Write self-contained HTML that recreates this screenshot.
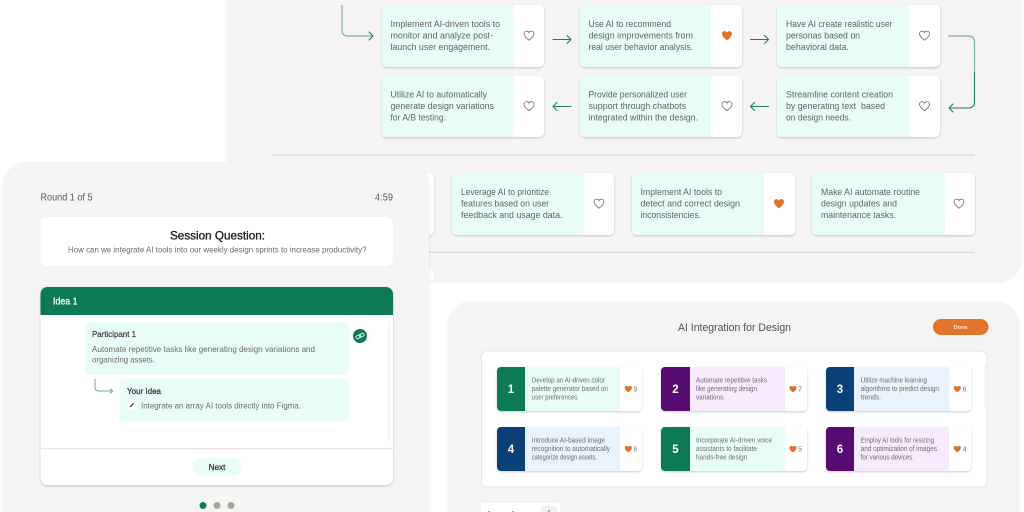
<!DOCTYPE html>
<html lang="en"><head><meta charset="utf-8"><title>AI Integration for Design</title>
<style>
html,body{margin:0;padding:0;background:#fff;width:1024px;height:512px;overflow:hidden}
svg{display:block;filter:blur(.3px)}
text{font-family:"Liberation Sans",sans-serif}
.c{font-size:9.3px;fill:#636363}
.s{font-size:6.9px;fill:#6e6e6e}
.n{font-size:11.5px;font-weight:700;fill:#fff;text-anchor:middle}
.k{font-size:7.2px;fill:#777}
.a{fill:none;stroke:#1c7f5e;stroke-width:1.1;stroke-linecap:round;stroke-linejoin:round}
.b{fill:none;stroke:#7db3a0;stroke-width:1.2}
.h{fill:none;stroke:#666;stroke-width:.8}
.o{fill:#e0722a}
.m{fill:#e8fdf6}.w{fill:#fff}
</style></head><body>
<svg width="1024" height="512" viewBox="0 0 1024 512" xmlns="http://www.w3.org/2000/svg">
<defs>
<path id="ht" d="M0 4.700C-1.700 3.400-5 1-5-1.800C-5-3.500-3.700-4.400-2.500-4.400C-1.400-4.400-.4-3.700 0-2.900C.4-3.700 1.400-4.400 2.500-4.400C3.700-4.400 5-3.500 5-1.800C5 1 1.700 3.400 0 4.700Z"/>
<filter id="sh" x="-10%" y="-10%" width="120%" height="125%"><feDropShadow dx="0" dy="1" stdDeviation="1.1" flood-color="#000" flood-opacity=".2"/></filter>
<filter id="sp" x="-5%" y="-5%" width="110%" height="110%"><feDropShadow dx="0" dy="1" stdDeviation="1.2" flood-color="#000" flood-opacity=".09"/></filter>
</defs>

<!-- top panel -->
<path d="M227 -20H1021V257A24 24 0 0 1 997 281H227Z" fill="#f5f4f2" filter="url(#sp)"/>
<rect x="272" y="154.500" width="703" height="1.2" fill="#d6d5d2"/>
<rect x="272" y="251.800" width="703" height="1.2" fill="#d6d5d2"/>

<!-- row 1 -->
<rect x="382" y="5" width="162" height="62" rx="5" class="w" filter="url(#sh)"/>
<path class="m" d="M387 5H514V67H387A5 5 0 0 1 382 62V10A5 5 0 0 1 387 5Z"/>
<rect x="580" y="5" width="162" height="62" rx="5" class="w" filter="url(#sh)"/>
<path class="m" d="M585 5H711V67H585A5 5 0 0 1 580 62V10A5 5 0 0 1 585 5Z"/>
<rect x="777" y="5" width="163" height="62" rx="5" class="w" filter="url(#sh)"/>
<path class="m" d="M782 5H909V67H782A5 5 0 0 1 777 62V10A5 5 0 0 1 782 5Z"/>
<!-- row 2 -->
<rect x="382" y="76" width="162" height="61" rx="5" class="w" filter="url(#sh)"/>
<path class="m" d="M387 76H514V137H387A5 5 0 0 1 382 132V81A5 5 0 0 1 387 76Z"/>
<rect x="580" y="76" width="162" height="61" rx="5" class="w" filter="url(#sh)"/>
<path class="m" d="M585 76H711V137H585A5 5 0 0 1 580 132V81A5 5 0 0 1 585 76Z"/>
<rect x="777" y="76" width="163" height="61" rx="5" class="w" filter="url(#sh)"/>
<path class="m" d="M782 76H909V137H782A5 5 0 0 1 777 132V81A5 5 0 0 1 782 76Z"/>
<!-- row 3 -->
<rect x="400" y="173" width="34" height="62" rx="5" class="w" filter="url(#sh)"/>
<rect x="452" y="173" width="162" height="62" rx="5" class="w" filter="url(#sh)"/>
<path class="m" d="M457 173H584V235H457A5 5 0 0 1 452 230V178A5 5 0 0 1 457 173Z"/>
<rect x="632" y="173" width="163" height="62" rx="5" class="w" filter="url(#sh)"/>
<path class="m" d="M637 173H764V235H637A5 5 0 0 1 632 230V178A5 5 0 0 1 637 173Z"/>
<rect x="812" y="173" width="163" height="62" rx="5" class="w" filter="url(#sh)"/>
<path class="m" d="M817 173H945V235H817A5 5 0 0 1 812 230V178A5 5 0 0 1 817 173Z"/>
<rect x="400" y="270" width="34" height="11" rx="4" class="w"/>

<g class="c">
<text x="390.500" y="27" textLength="109.500" lengthAdjust="spacingAndGlyphs">Implement AI-driven tools to</text>
<text x="390.500" y="38.500" textLength="102.500" lengthAdjust="spacingAndGlyphs">monitor and analyze post-</text>
<text x="390.500" y="50" textLength="99.500" lengthAdjust="spacingAndGlyphs">launch user engagement.</text>
<text x="588.500" y="27" textLength="82.500" lengthAdjust="spacingAndGlyphs">Use AI to recommend</text>
<text x="588.500" y="38.500" textLength="104.500" lengthAdjust="spacingAndGlyphs">design improvements from</text>
<text x="588.500" y="50" textLength="104.500" lengthAdjust="spacingAndGlyphs">real user behavior analysis.</text>
<text x="786" y="27" textLength="106.500" lengthAdjust="spacingAndGlyphs">Have AI create realistic user</text>
<text x="786" y="38.500" textLength="74" lengthAdjust="spacingAndGlyphs">personas based on</text>
<text x="786" y="50" textLength="63" lengthAdjust="spacingAndGlyphs">behavioral data.</text>
<text x="390.500" y="97.500" textLength="96.500" lengthAdjust="spacingAndGlyphs">Utilize AI to automatically</text>
<text x="390.500" y="109" textLength="103.500" lengthAdjust="spacingAndGlyphs">generate design variations</text>
<text x="390.500" y="120.500" textLength="55.500" lengthAdjust="spacingAndGlyphs">for A/B testing.</text>
<text x="588.500" y="97.500" textLength="98.500" lengthAdjust="spacingAndGlyphs">Provide personalized user</text>
<text x="588.500" y="109" textLength="97.500" lengthAdjust="spacingAndGlyphs">support through chatbots</text>
<text x="588.500" y="120.500" textLength="109.500" lengthAdjust="spacingAndGlyphs">integrated within the design.</text>
<text x="786" y="97.500" textLength="107" lengthAdjust="spacingAndGlyphs">Streamline content creation</text>
<text x="786" y="109" textLength="99" xml:space="preserve" lengthAdjust="spacingAndGlyphs">by generating text  based</text>
<text x="786" y="120.500" textLength="65" lengthAdjust="spacingAndGlyphs">on design needs.</text>
<text x="461" y="195" textLength="88" lengthAdjust="spacingAndGlyphs">Leverage AI to prioritize</text>
<text x="461" y="206.500" textLength="88" lengthAdjust="spacingAndGlyphs">features based on user</text>
<text x="461" y="218" textLength="101.500" lengthAdjust="spacingAndGlyphs">feedback and usage data.</text>
<text x="640.500" y="195" textLength="81.500" lengthAdjust="spacingAndGlyphs">Implement AI tools to</text>
<text x="640.500" y="206.500" textLength="99.500" lengthAdjust="spacingAndGlyphs">detect and correct design</text>
<text x="640.500" y="218" textLength="60.500" lengthAdjust="spacingAndGlyphs">inconsistencies.</text>
<text x="821" y="195" textLength="99" lengthAdjust="spacingAndGlyphs">Make AI automate routine</text>
<text x="821" y="206.500" textLength="76" lengthAdjust="spacingAndGlyphs">design updates and</text>
<text x="821" y="218" textLength="75" lengthAdjust="spacingAndGlyphs">maintenance tasks.</text>
</g>

<use href="#ht" x="529" y="35.500" class="h"/>
<use href="#ht" x="727" y="35.500" class="o"/>
<use href="#ht" x="924.500" y="35.500" class="h"/>
<use href="#ht" x="529" y="106" class="h"/>
<use href="#ht" x="727" y="106" class="h"/>
<use href="#ht" x="924.500" y="106" class="h"/>
<use href="#ht" x="599" y="203.500" class="h"/>
<use href="#ht" x="779" y="203.500" class="o"/>
<use href="#ht" x="959" y="203.500" class="h"/>

<!-- arrows -->
<path class="b" d="M342 5V30Q342 36 348 36H372"/><path class="a" d="M369 32L373 36L369 40"/>
<path class="a" d="M553 39.500H571M567 35.500L571 39.500L567 43.500"/>
<path class="a" d="M750.500 39.500H768.500M764.500 35.500L768.500 39.500L764.500 43.500"/>
<path class="a" d="M553 106.500H571M557 102.500L553 106.500L557 110.500"/>
<path class="a" d="M750.500 106.500H768.500M754.500 102.500L750.500 106.500L754.500 110.500"/>
<path class="b" d="M948 36H968Q974.500 36 974.500 42V72"/>
<path class="a" d="M974.500 72V102Q974.500 108 968 108H949M953 104L949 108L953 112"/>

<!-- bottom panel -->
<path d="M472 301H995A24 24 0 0 1 1019 325V530H448V325A24 24 0 0 1 472 301Z" fill="#f5f4f2" filter="url(#sp)"/>
<text x="678" y="331" font-size="10.800" fill="#505050" textLength="113" lengthAdjust="spacingAndGlyphs">AI Integration for Design</text>
<rect x="933" y="319" width="55.500" height="16" rx="8" fill="#e2752b"/>
<text x="960.500" y="329" font-size="5.500" font-weight="700" fill="#ffe9d9" text-anchor="middle">Done</text>
<rect x="481.500" y="351" width="505.500" height="136" rx="6" class="w" stroke="#e6e5e2" stroke-width="1"/>
<rect x="984" y="365" width="1.500" height="42" fill="#f3f3f3"/>

<!-- idea cards -->
<g filter="url(#sh)"><rect x="497" y="367" width="145" height="44" rx="4" class="w"/></g>
<path fill="#e8fdf6" d="M525 367H620V411H525Z"/><path fill="#0c7a56" d="M501 367H525V411H501A4 4 0 0 1 497 407V371A4 4 0 0 1 501 367Z"/>
<g filter="url(#sh)"><rect x="661" y="367" width="146" height="44" rx="4" class="w"/></g>
<path fill="#f7eafd" d="M690 367H785V411H690Z"/><path fill="#560a72" d="M665 367H690V411H665A4 4 0 0 1 661 407V371A4 4 0 0 1 665 367Z"/>
<g filter="url(#sh)"><rect x="826" y="367" width="145" height="44" rx="4" class="w"/></g>
<path fill="#e8f3fd" d="M854 367H949V411H854Z"/><path fill="#0b3f77" d="M830 367H854V411H830A4 4 0 0 1 826 407V371A4 4 0 0 1 830 367Z"/>
<g filter="url(#sh)"><rect x="497" y="427" width="145" height="44" rx="4" class="w"/></g>
<path fill="#e8f3fd" d="M525 427H620V471H525Z"/><path fill="#0b3f77" d="M501 427H525V471H501A4 4 0 0 1 497 467V431A4 4 0 0 1 501 427Z"/>
<g filter="url(#sh)"><rect x="661" y="427" width="146" height="44" rx="4" class="w"/></g>
<path fill="#e8fdf6" d="M690 427H785V471H690Z"/><path fill="#0c7a56" d="M665 427H690V471H665A4 4 0 0 1 661 467V431A4 4 0 0 1 665 427Z"/>
<g filter="url(#sh)"><rect x="826" y="427" width="145" height="44" rx="4" class="w"/></g>
<path fill="#f7eafd" d="M854 427H949V471H854Z"/><path fill="#560a72" d="M830 427H854V471H830A4 4 0 0 1 826 467V431A4 4 0 0 1 830 427Z"/>

<text class="n" x="511" y="393">1</text><text class="n" x="675.500" y="393">2</text><text class="n" x="840" y="393">3</text>
<text class="n" x="511" y="453">4</text><text class="n" x="675.500" y="453">5</text><text class="n" x="840" y="453">6</text>

<g class="s">
<text x="531.700" y="382.500" textLength="73.300" lengthAdjust="spacingAndGlyphs">Develop an AI-driven color</text>
<text x="531.700" y="391" textLength="76.300" lengthAdjust="spacingAndGlyphs">palette generator based on</text>
<text x="531.700" y="399.500" textLength="47.300" lengthAdjust="spacingAndGlyphs">user preferences.</text>
<text x="696" y="382.500" textLength="71" lengthAdjust="spacingAndGlyphs">Automate repetitive tasks</text>
<text x="696" y="391" textLength="61" lengthAdjust="spacingAndGlyphs">like generating design</text>
<text x="696" y="399.500" textLength="29" lengthAdjust="spacingAndGlyphs">variations.</text>
<text x="860.700" y="382.500" textLength="66.300" lengthAdjust="spacingAndGlyphs">Utilize machine learning</text>
<text x="860.700" y="391" textLength="78.300" lengthAdjust="spacingAndGlyphs">algorithms to predict design</text>
<text x="860.700" y="399.500" textLength="20.300" lengthAdjust="spacingAndGlyphs">trends.</text>
<text x="531.700" y="442.500" textLength="73.300" lengthAdjust="spacingAndGlyphs">Introduce AI-based image</text>
<text x="531.700" y="451" textLength="78.300" lengthAdjust="spacingAndGlyphs">recognition to automatically</text>
<text x="531.700" y="459.500" textLength="65.300" lengthAdjust="spacingAndGlyphs">categorize design assets.</text>
<text x="696" y="442.500" textLength="76" lengthAdjust="spacingAndGlyphs">Incorporate AI-driven voice</text>
<text x="696" y="451" textLength="61" lengthAdjust="spacingAndGlyphs">assistants to facilitate</text>
<text x="696" y="459.500" textLength="53" lengthAdjust="spacingAndGlyphs">hands-free design.</text>
<text x="860.700" y="442.500" textLength="73.300" lengthAdjust="spacingAndGlyphs">Employ AI tools for resizing</text>
<text x="860.700" y="451" textLength="76.300" lengthAdjust="spacingAndGlyphs">and optimization of images</text>
<text x="860.700" y="459.500" textLength="53.300" lengthAdjust="spacingAndGlyphs">for various devices.</text>
</g>

<g class="o">
<use href="#ht" transform="translate(628.300 389) scale(.72)"/>
<use href="#ht" transform="translate(793 389) scale(.72)"/>
<use href="#ht" transform="translate(957.300 389) scale(.72)"/>
<use href="#ht" transform="translate(628.300 449) scale(.72)"/>
<use href="#ht" transform="translate(793 449) scale(.72)"/>
<use href="#ht" transform="translate(957.300 449) scale(.72)"/>
</g>
<g class="k">
<text x="633.500" y="391.700">9</text><text x="798" y="391.700">7</text><text x="962.500" y="391.700">6</text>
<text x="633.500" y="451.700">6</text><text x="798" y="451.700">5</text><text x="962.500" y="451.700">4</text>
</g>

<rect x="481" y="503" width="79" height="14" rx="3" class="w"/>
<rect x="541" y="506" width="16" height="10" rx="3" fill="#f1f0ee"/>
<rect x="488" y="511" width="2" height="1" fill="#aaa"/><rect x="512" y="511" width="2" height="1" fill="#aaa"/><rect x="548" y="510" width="2" height="2" fill="#aaa"/>

<!-- left panel -->
<path d="M27 162H405A24 24 0 0 1 429 186V530H3V186A24 24 0 0 1 27 162Z" fill="#f5f4f2" filter="url(#sp)"/>
<text x="40.500" y="200.500" font-size="9.800" fill="#5a5a5a" textLength="52" lengthAdjust="spacingAndGlyphs">Round 1 of 5</text>
<text x="375" y="200.500" font-size="9.800" fill="#5a5a5a" textLength="18" lengthAdjust="spacingAndGlyphs">4:59</text>
<rect x="40.500" y="217" width="352.500" height="49" rx="7" class="w"/>
<text x="170" y="239.500" font-size="12" fill="#1e1e1e" stroke="#1e1e1e" stroke-width=".35" textLength="95" lengthAdjust="spacingAndGlyphs">Session Question:</text>
<text x="68" y="252.500" font-size="7.900" fill="#6a6a6a" textLength="298.500" lengthAdjust="spacingAndGlyphs">How can we integrate AI tools into our weekly design sprints to increase productivity?</text>

<g filter="url(#sh)"><rect x="40.500" y="287" width="352.500" height="198" rx="7" class="w"/></g>
<path d="M47.500 287H386A7 7 0 0 1 393 294V315H40.500V294A7 7 0 0 1 47.500 287Z" fill="#0c7a56"/>
<text x="53" y="304.500" font-size="9.800" fill="#eefaf5" stroke="#eefaf5" stroke-width=".3" textLength="24.500" lengthAdjust="spacingAndGlyphs">Idea 1</text>
<rect x="388" y="322" width="2" height="120" fill="#f4f4f3"/>
<rect x="85" y="322" width="264" height="53" rx="4" class="m"/>
<text x="92" y="337" font-size="8.300" fill="#444" stroke="#444" stroke-width=".25" textLength="44" lengthAdjust="spacingAndGlyphs">Participant 1</text>
<text x="92" y="352" font-size="8.500" fill="#6a6a6a" textLength="223" lengthAdjust="spacingAndGlyphs">Automate repetitive tasks like generating design variations and</text>
<text x="92" y="362.500" font-size="8.500" fill="#6a6a6a" textLength="63" lengthAdjust="spacingAndGlyphs">organizing assets.</text>
<circle cx="360" cy="336" r="7" fill="#0c7a56"/>
<g fill="none" stroke="#cfe9de" stroke-width="1" transform="rotate(-25 360 336)"><rect x="355.800" y="334.500" width="4.800" height="3" rx="1.500"/><rect x="359.400" y="334.500" width="4.800" height="3" rx="1.500"/></g>
<rect x="120" y="379" width="229" height="42" rx="4" class="m"/>
<text x="127" y="394" font-size="8.300" fill="#333" stroke="#333" stroke-width=".25" textLength="34" lengthAdjust="spacingAndGlyphs">Your Idea</text>
<circle cx="132" cy="405" r="5" class="w"/>
<path d="M130 407L133.500 403.200" stroke="#222" stroke-width="1.100" fill="none"/>
<text x="141" y="408.500" font-size="8.600" fill="#6a6a6a" textLength="160" lengthAdjust="spacingAndGlyphs">Integrate an array AI tools directly into Figma.</text>
<path d="M95 379V387Q95 391 99 391H111" fill="none" stroke="#6ba793" stroke-width="1"/>
<path d="M110 388.500L112.500 391L110 393.500" fill="none" stroke="#4d9680" stroke-width="1"/>
<rect x="40.500" y="448" width="352.500" height="1.200" fill="#e9e8e6"/>
<rect x="192.500" y="458" width="49.500" height="17.500" rx="8.700" class="m"/>
<text x="217" y="470" font-size="8.200" fill="#333" stroke="#333" stroke-width=".25" text-anchor="middle">Next</text>
<circle cx="203" cy="505.500" r="3.500" fill="#0c7a56"/>
<circle cx="217" cy="505.500" r="3.500" fill="#a8a39e"/>
<circle cx="231" cy="505.500" r="3.500" fill="#a8a39e"/>
</svg>
</body></html>
